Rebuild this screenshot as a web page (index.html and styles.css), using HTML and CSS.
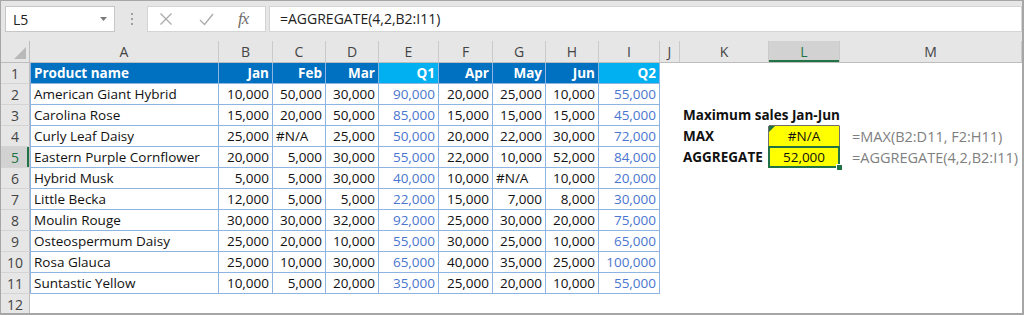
FILE: index.html
```html
<!DOCTYPE html>
<html lang="en">
<head>
    <meta charset="UTF-8">
    <meta name="viewport" content="width=device-width, initial-scale=1.0">
    <title>AGGREGATE - Maximum sales</title>
    <link rel="stylesheet" href="styles.css">
</head>
<body>
<div class="excel">

    <!-- name box + formula bar -->
    <div class="toolbar">
        <div class="namebox">
            <span>L5</span>
            <svg width="7" height="4" viewBox="0 0 7 4"><polygon points="0,0 7,0 3.5,4" fill="#7a7a7a"/></svg>
        </div>
        <div class="grip"><i></i><i></i><i></i></div>
        <div class="fbtns">
            <svg width="14" height="14" viewBox="0 0 14 14"><path d="M1.5 1.5L12.5 12.5M12.5 1.5L1.5 12.5" stroke="#ababab" stroke-width="1.3" fill="none"/></svg>
            <svg width="15" height="13" viewBox="0 0 15 13"><path d="M1 7L5.5 11.5L14 1" stroke="#ababab" stroke-width="1.3" fill="none"/></svg>
            <span class="fx">fx</span>
        </div>
        <div class="formula">=AGGREGATE(4,2,B2:I11)</div>
    </div>

    <table class="sheet">
        <colgroup>
            <col class="c-rh">
            <col class="c-a">
            <col class="c-n">
            <col class="c-n2">
            <col class="c-n2">
            <col class="c-q">
            <col class="c-n">
            <col class="c-n2">
            <col class="c-n2">
            <col class="c-q2">
            <col class="c-j">
            <col class="c-k">
            <col class="c-l">
            <col class="c-m">
        </colgroup>
        <thead>
            <tr>
                <th class="corner"><svg width="12" height="12" viewBox="0 0 12 12"><polygon points="12,0 12,12 0,12" fill="#b9b9b9"/></svg></th>
                <th>A</th><th>B</th><th>C</th><th>D</th><th>E</th><th>F</th><th>G</th><th>H</th><th>I</th>
                <th>J</th><th>K</th><th class="on">L</th><th>M</th>
            </tr>
        </thead>
        <tbody>
            <tr>
                <th class="rh">1</th>
                <td class="d hd first">Product name</td>
                <td class="d hd n">Jan</td>
                <td class="d hd n">Feb</td>
                <td class="d hd n">Mar</td>
                <td class="d hd qh n">Q1</td>
                <td class="d hd n">Apr</td>
                <td class="d hd n">May</td>
                <td class="d hd n">Jun</td>
                <td class="d hd qh n">Q2</td>
                <td></td><td></td><td></td><td></td>
            </tr>
            <tr>
                <th class="rh">2</th>
                <td class="d first">American Giant Hybrid</td>
                <td class="d n">10,000</td><td class="d n">50,000</td><td class="d n">30,000</td><td class="d n q">90,000</td>
                <td class="d n">20,000</td><td class="d n">25,000</td><td class="d n">10,000</td><td class="d n q">55,000</td>
                <td></td><td></td><td></td><td></td>
            </tr>
            <tr>
                <th class="rh">3</th>
                <td class="d first">Carolina Rose</td>
                <td class="d n">15,000</td><td class="d n">20,000</td><td class="d n">50,000</td><td class="d n q">85,000</td>
                <td class="d n">15,000</td><td class="d n">15,000</td><td class="d n">15,000</td><td class="d n q">45,000</td>
                <td></td><td class="lbl spill">Maximum sales Jan-Jun</td><td class="box-top"></td><td></td>
            </tr>
            <tr>
                <th class="rh">4</th>
                <td class="d first">Curly Leaf Daisy</td>
                <td class="d n">25,000</td><td class="d">#N/A</td><td class="d n">25,000</td><td class="d n q">50,000</td>
                <td class="d n">20,000</td><td class="d n">22,000</td><td class="d n">30,000</td><td class="d n q">72,000</td>
                <td></td><td class="lbl box-left">MAX</td><td class="yel flag">#N/A</td><td class="fm">=MAX(B2:D11, F2:H11)</td>
            </tr>
            <tr>
                <th class="rh on">5</th>
                <td class="d first">Eastern Purple Cornflower</td>
                <td class="d n">20,000</td><td class="d n">5,000</td><td class="d n">30,000</td><td class="d n q">55,000</td>
                <td class="d n">22,000</td><td class="d n">10,000</td><td class="d n">52,000</td><td class="d n q">84,000</td>
                <td></td><td class="lbl box-left">AGGREGATE</td><td class="yel sel">52,000</td><td class="fm">=AGGREGATE(4,2,B2:I11)</td>
            </tr>
            <tr>
                <th class="rh">6</th>
                <td class="d first">Hybrid Musk</td>
                <td class="d n">5,000</td><td class="d n">5,000</td><td class="d n">30,000</td><td class="d n q">40,000</td>
                <td class="d n">10,000</td><td class="d">#N/A</td><td class="d n">10,000</td><td class="d n q">20,000</td>
                <td></td><td></td><td></td><td></td>
            </tr>
            <tr>
                <th class="rh">7</th>
                <td class="d first">Little Becka</td>
                <td class="d n">12,000</td><td class="d n">5,000</td><td class="d n">5,000</td><td class="d n q">22,000</td>
                <td class="d n">15,000</td><td class="d n">7,000</td><td class="d n">8,000</td><td class="d n q">30,000</td>
                <td></td><td></td><td></td><td></td>
            </tr>
            <tr>
                <th class="rh">8</th>
                <td class="d first">Moulin Rouge</td>
                <td class="d n">30,000</td><td class="d n">30,000</td><td class="d n">32,000</td><td class="d n q">92,000</td>
                <td class="d n">25,000</td><td class="d n">30,000</td><td class="d n">20,000</td><td class="d n q">75,000</td>
                <td></td><td></td><td></td><td></td>
            </tr>
            <tr>
                <th class="rh">9</th>
                <td class="d first">Osteospermum Daisy</td>
                <td class="d n">25,000</td><td class="d n">20,000</td><td class="d n">10,000</td><td class="d n q">55,000</td>
                <td class="d n">30,000</td><td class="d n">25,000</td><td class="d n">10,000</td><td class="d n q">65,000</td>
                <td></td><td></td><td></td><td></td>
            </tr>
            <tr>
                <th class="rh">10</th>
                <td class="d first">Rosa Glauca</td>
                <td class="d n">25,000</td><td class="d n">10,000</td><td class="d n">30,000</td><td class="d n q">65,000</td>
                <td class="d n">40,000</td><td class="d n">35,000</td><td class="d n">25,000</td><td class="d n q">100,000</td>
                <td></td><td></td><td></td><td></td>
            </tr>
            <tr>
                <th class="rh">11</th>
                <td class="d first">Suntastic Yellow</td>
                <td class="d n">10,000</td><td class="d n">5,000</td><td class="d n">20,000</td><td class="d n q">35,000</td>
                <td class="d n">25,000</td><td class="d n">20,000</td><td class="d n">10,000</td><td class="d n q">55,000</td>
                <td></td><td></td><td></td><td></td>
            </tr>
            <tr>
                <th class="rh">12</th>
                <td></td><td></td><td></td><td></td><td></td><td></td><td></td><td></td><td></td>
                <td></td><td></td><td></td><td></td>
            </tr>
        </tbody>
    </table>
</div>
</body>
</html>
```

FILE: styles.css
```css
body {
    margin: 0;
    background: #fff;
}

.excel {
    width: 1024px;
    height: 315px;
    box-sizing: border-box;
    border: 1px solid #a6a6a6;
    border-right-width: 2px;
    border-bottom-width: 2px;
    overflow: hidden;
    font-family: "Open Sans", sans-serif;
}

/* formula bar */
.toolbar {
    height: 40px;
    box-sizing: border-box;
    background: #e6e6e6;
    display: flex;
    align-items: flex-start;
    padding: 5px 0 0 4px;
}

.namebox {
    width: 110px;
    height: 26px;
    box-sizing: border-box;
    background: #fff;
    border: 1px solid #c6c6c6;
    display: flex;
    align-items: center;
    justify-content: space-between;
    padding: 0 7px 0 7px;
    font-size: 14px;
    color: #222;
}

.grip {
    display: flex;
    flex-direction: column;
    gap: 3px;
    margin: 7px 14px 0 16px;
}

.grip i {
    width: 2px;
    height: 2px;
    background: #a0a0a0;
}

.fbtns {
    width: 119px;
    height: 26px;
    box-sizing: border-box;
    background: #fff;
    border: 1px solid #d4d4d4;
    display: flex;
    align-items: center;
    padding-left: 11px;
}

.fbtns svg:nth-child(2) {
    margin-left: 26px;
}

.fx {
    margin-left: 24px;
    font-family: "Liberation Serif", serif;
    font-style: italic;
    font-size: 17px;
    color: #6b6b6b;
    letter-spacing: -1px;
}

.formula {
    flex: 1;
    height: 26px;
    box-sizing: border-box;
    margin-left: 3px;
    background: #fff;
    border: 1px solid #d4d4d4;
    padding-left: 10px;
    font-size: 14px;
    line-height: 24px;
    color: #222;
}

/* sheet */
.sheet {
    border-collapse: separate;
    border-spacing: 0;
    table-layout: fixed;
    width: 1021px;
    font-size: 13.5px;
    color: #111;
}

.c-rh { width: 29px; }
.c-a  { width: 189px; }
.c-n  { width: 54px; }
.c-n2 { width: 53px; }
.c-q  { width: 60px; }
.c-q2 { width: 61px; }
.c-j  { width: 20px; }
.c-k  { width: 89px; }
.c-l  { width: 71px; }
.c-m  { width: 182px; }

.sheet td, .sheet th {
    box-sizing: border-box;
    padding: 0 3px;
    white-space: nowrap;
    overflow: hidden;
    border-right: 1px solid transparent;
    border-bottom: 1px solid transparent;
}

.sheet thead th {
    height: 22px;
    background: #e6e6e6;
    font-weight: normal;
    font-size: 14px;
    color: #444;
    border-right-color: #cacaca;
    border-bottom-color: #bdbdbd;
}

.sheet thead th.corner {
    text-align: right;
    vertical-align: bottom;
    padding: 0 3px 3px 0;
    border-right-color: #bdbdbd;
}

.corner svg {
    display: block;
    margin-left: auto;
}

.sheet thead th.on {
    background: #d2d2d2;
    color: #217346;
    box-shadow: inset 0 -2px #217346;
}

.sheet tbody tr {
    height: 21px;
}

.sheet .rh {
    padding: 0;
    text-align: center;
    font-weight: normal;
    font-size: 14px;
    background: #e6e6e6;
    color: #444;
    border-right-color: #bdbdbd;
    border-bottom-color: #d4d4d4;
}

.sheet .rh.on {
    background: #d2d2d2;
    color: #217346;
    box-shadow: inset -2px 0 #217346;
}

/* data range A1:I11 */
.sheet .d {
    border-right-color: #8db4e2;
    border-bottom-color: #8db4e2;
}

.sheet .first {
    border-left: 1px solid #8db4e2;
}

.n {
    text-align: right;
}

.hd {
    background: #0070c0;
    color: #fff;
    font-weight: bold;
}

.hd.qh {
    background: #00b0f0;
}

.q {
    color: #4a76cf;
}

/* max / aggregate block */
.lbl {
    font-weight: bold;
}

.sheet .spill {
    overflow: visible;
}

.sheet .box-top {
    border-bottom-color: #6f6f6f;
}

.sheet .box-left {
    border-right-color: #6f6f6f;
}

.sheet .yel {
    position: relative;
    overflow: visible;
    background: #ffff00;
    text-align: center;
    border-right-color: #6f6f6f;
    border-bottom-color: #6f6f6f;
}

.flag::before {
    content: "";
    position: absolute;
    left: 0;
    top: 0;
    border-top: 6px solid #1e7145;
    border-right: 6px solid transparent;
}

.sel::after {
    content: "";
    position: absolute;
    left: -1px;
    top: -1px;
    right: -1px;
    bottom: -1px;
    border: 2px solid #217346;
}

.sel::before {
    content: "";
    position: absolute;
    right: -4px;
    bottom: -4px;
    width: 5px;
    height: 5px;
    background: #217346;
    border: 1px solid #fff;
    z-index: 1;
}

.sheet .fm {
    overflow: visible;
    padding-left: 12px;
    font-size: 14.5px;
    color: #7f7f7f;
}
```
